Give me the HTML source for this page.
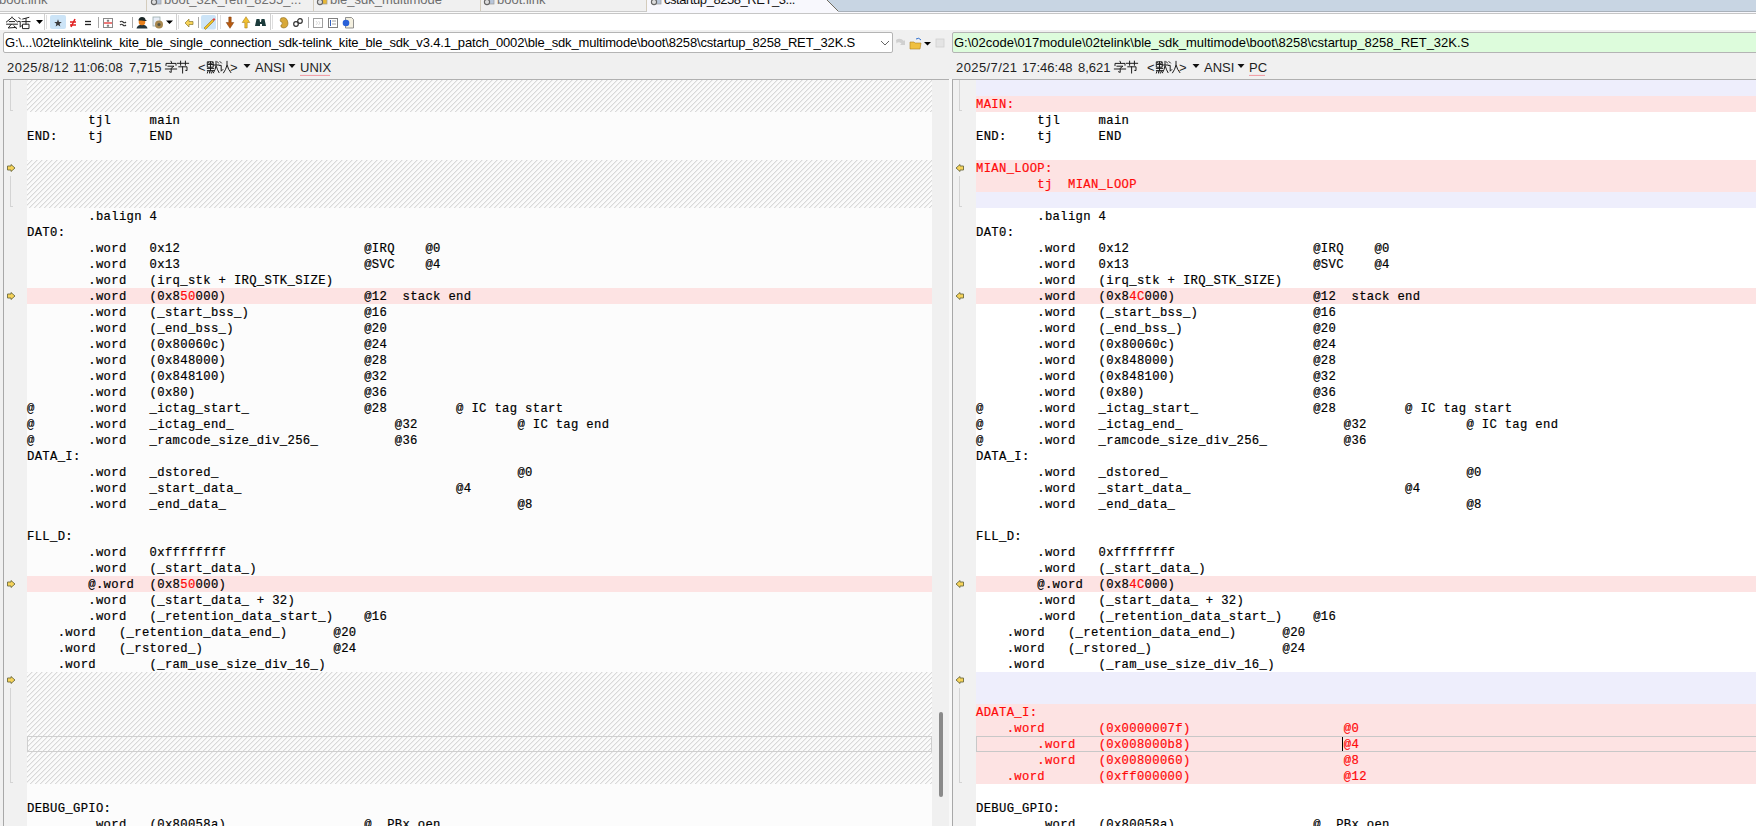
<!DOCTYPE html>
<html><head><meta charset="utf-8"><style>
*{margin:0;padding:0;box-sizing:border-box}
html,body{width:1756px;height:826px;overflow:hidden}
body{position:relative;background:#f0f0f0;font-family:"Liberation Sans",sans-serif;color:#000}
.a{position:absolute}
.bg{position:absolute;height:16px}
.pink{background:#fde3e3}
.lav{background:#eeeefc}
.hatch{position:absolute;display:block}
.ln{position:absolute;height:16px;line-height:16px;white-space:pre;font-family:"Liberation Mono",monospace;font-size:12.22px;letter-spacing:0.33px;color:#000;padding-top:1px;-webkit-text-stroke:0.2px #000}
.r{color:#ff0a0a;-webkit-text-stroke-color:#ff0a0a}
.ui{position:absolute;white-space:pre;font-size:13px;line-height:16px;color:#1e1e1e;padding-top:1.5px}

</style></head><body>
<svg width="0" height="0" style="position:absolute"><defs>
<pattern id="hp" width="5" height="5" patternUnits="userSpaceOnUse"><rect width="5" height="5" fill="#fbfbfb"/><rect x="4" y="0" width="1" height="1" fill="#d9d9d9"/><rect x="0" y="0" width="1" height="1" fill="#ededed"/><rect x="3" y="1" width="1" height="1" fill="#d9d9d9"/><rect x="4" y="1" width="1" height="1" fill="#ededed"/><rect x="2" y="2" width="1" height="1" fill="#d9d9d9"/><rect x="3" y="2" width="1" height="1" fill="#ededed"/><rect x="1" y="3" width="1" height="1" fill="#d9d9d9"/><rect x="2" y="3" width="1" height="1" fill="#ededed"/><rect x="0" y="4" width="1" height="1" fill="#d9d9d9"/><rect x="1" y="4" width="1" height="1" fill="#ededed"/></pattern>
</defs></svg>
<!-- tab bar -->
<div class="a" style="left:0;top:0;width:1756px;height:11px;background:#f0f0f0"></div>
<div class="a" style="left:0;top:11px;width:1756px;height:1px;background:#c9c9c9"></div>
<div class="a" style="left:0;top:12px;width:1756px;height:1px;background:#fbfbfb"></div>
<div class="a" style="left:0;top:13px;width:1756px;height:1px;background:#c6c6c6"></div>
<div class="a" style="left:0;top:14px;width:1756px;height:16px;background:#ffffff"></div>
<!-- right blue area -->
<svg class="a" style="left:640px;top:0" width="1116" height="13">
<polygon points="7,0 187,0 198.5,11.5 1116,11.5 1116,13 7,13" fill="#f8f8fd"/>
<polygon points="187,0 1116,0 1116,11 198.5,11" fill="#c8d5e3"/>
<line x1="187" y1="0" x2="198.5" y2="11.5" stroke="#6f6a5e" stroke-width="1"/>
<line x1="198.5" y1="11.5" x2="1116" y2="11.5" stroke="#a9b1ba" stroke-width="1"/>
<rect x="6" y="0" width="1" height="11" fill="#d4ccbc"/>
</svg>
<div class="a" style="left:146px;top:0;width:1px;height:11px;background:#d4ccbc"></div>
<div class="a" style="left:313px;top:0;width:1px;height:11px;background:#d4ccbc"></div>
<div class="a" style="left:480px;top:0;width:1px;height:11px;background:#d4ccbc"></div>
<div class="ui" style="left:-1px;top:-9.5px;color:#6e6e6e">boot.link</div>
<div class="ui" style="left:164px;top:-9.5px;color:#6e6e6e">boot_32k_reth_8255_...</div>
<div class="ui" style="left:330px;top:-9.5px;color:#6e6e6e">ble_sdk_multimode</div>
<div class="ui" style="left:497px;top:-9.5px;color:#6e6e6e">boot.link</div>
<div class="ui" style="left:664px;top:-9.5px;color:#111;letter-spacing:-0.45px">cstartup_8258_RET_3...</div>
<!-- tab icons -->
<svg class="a" style="left:150px;top:-3px" width="12" height="10"><rect x="5" y="0" width="6" height="7" fill="#b8c6da" stroke="#999" stroke-width="0.7"/><circle cx="4" cy="5" r="2.6" fill="#ddd" stroke="#666" stroke-width="1.1"/></svg>
<svg class="a" style="left:316px;top:-3px" width="12" height="10"><rect x="5" y="0" width="6" height="7" fill="#e8b838" stroke="#999" stroke-width="0.7"/><circle cx="4" cy="5" r="2.6" fill="#ddd" stroke="#666" stroke-width="1.1"/></svg>
<svg class="a" style="left:483px;top:-3px" width="12" height="10"><rect x="5" y="0" width="6" height="7" fill="#b8c6da" stroke="#999" stroke-width="0.7"/><circle cx="4" cy="5" r="2.6" fill="#ddd" stroke="#666" stroke-width="1.1"/></svg>
<svg class="a" style="left:650px;top:-3px" width="12" height="10"><rect x="5" y="0" width="6" height="7" fill="#b8c6da" stroke="#999" stroke-width="0.7"/><circle cx="4" cy="5" r="2.6" fill="#ddd" stroke="#666" stroke-width="1.1"/></svg>
<!-- toolbar -->
<svg class="a" style="left:0;top:14px" width="380" height="16">
<polygon points="36,6 43,6 39.5,10" fill="#000"/>
<rect x="44" y="0" width="1" height="16" fill="#d0d0d0"/>
<rect x="46" y="1" width="1" height="14" fill="#c8c8c8" opacity=".6"/>
<rect x="50" y="1" width="16" height="14" rx="2" fill="#cce4f7"/>
<polygon points="58.00,5.30 59.00,7.92 61.80,8.06 59.62,9.83 60.35,12.54 58.00,11.00 55.65,12.54 56.38,9.83 54.20,8.06 57.00,7.92" fill="#3a3a3a"/>
<g stroke="#e02020" stroke-width="1.5"><line x1="70" y1="8" x2="76" y2="8"/><line x1="70" y1="11" x2="76" y2="11"/><line x1="75" y1="5" x2="71" y2="13"/></g>
<g stroke="#222" stroke-width="1.3"><line x1="85" y1="7.5" x2="91" y2="7.5"/><line x1="85" y1="10.5" x2="91" y2="10.5"/></g>
<rect x="98" y="3" width="1" height="11" fill="#a8a8a8"/>
<rect x="103.5" y="4.5" width="9" height="9" fill="#fff" stroke="#8a8a8a"/>
<line x1="104" y1="9" x2="112" y2="9" stroke="#e02020" stroke-width="1.2"/><path d="M108,5.5 v2.5 M106.8,6.8 h2.4 M108,10.5 v2.5 M106.8,11.8 h2.4" stroke="#555" stroke-width="0.8"/>
<g stroke="#333" stroke-width="1.1" fill="none"><path d="M120,8 q1.5,-1.5 3,0 t3,0"/><path d="M120,11 q1.5,-1.5 3,0 t3,0"/></g>
<rect x="132" y="3" width="1" height="11" fill="#a8a8a8"/>
<path d="M136.5,14.5 q0.5,-3.5 5.5,-4 q5,0.5 5.5,4 z" fill="#24343a"/>
<circle cx="142" cy="8" r="3.3" fill="#e8801c"/>
<path d="M138.4,6.6 q0.4,-3.6 3.6,-3.6 q3.2,0 3.6,3 l1.6,1 l-2,0 q-3,-1 -6.8,-0.4 z" fill="#1a2626"/>
<rect x="153" y="3" width="7" height="9" fill="#e8eef8" stroke="#9aa" stroke-width="0.8"/>
<circle cx="159" cy="10.5" r="4" fill="#a88850"/><circle cx="159" cy="10.5" r="1.6" fill="#554"/>
<polygon points="166,6.5 173,6.5 169.5,10" fill="#000"/>
<rect x="176" y="0" width="1" height="16" fill="#d0d0d0"/>
<rect x="178" y="1" width="1" height="14" fill="#c8c8c8" opacity=".6"/>
<path d="M185,9 l4,-4 v2.5 h4 v3 h-4 v2.5 z" fill="#f8d458" stroke="#8a7a30" stroke-width="0.7"/>
<rect x="198" y="3" width="1" height="11" fill="#a8a8a8"/>
<rect x="201" y="1" width="15" height="14.5" rx="2" fill="#cce4f7"/>
<path d="M204,14 l8.5,-8.5 l1.5,1.5 l-8.5,8.5 z" fill="#f0c020" stroke="#806010" stroke-width="0.5"/>
<path d="M212.5,5.5 l1.5,-1.5 l1.5,1.5 l-1.5,1.5 z" fill="#e04040"/>
<rect x="217" y="0" width="1" height="16" fill="#d0d0d0"/>
<rect x="220" y="1" width="1" height="14" fill="#c8c8c8" opacity=".6"/>
<path d="M228.8,3 h2.4 v5.5 h2.6 l-3.8,5.8 l-3.8,-5.8 h2.6 z" fill="#b85a10" stroke="#7a3a08" stroke-width="0.5"/>
<path d="M244.8,14 h2.4 v-5.5 h2.6 l-3.8,-5.8 l-3.8,5.8 h2.6 z" fill="#f0c030" stroke="#9a7010" stroke-width="0.5"/>
<path d="M255,12 l1.5,-7 h3 l0.5,3 h1 l0.5,-3 h3 l1.5,7 h-4 v-2 h-2 v2 z" fill="#1c3c3c"/>
<rect x="270" y="0" width="1" height="16" fill="#d0d0d0"/>
<rect x="272" y="1" width="1" height="14" fill="#c8c8c8" opacity=".6"/>
<path d="M281,4 q6,-2 7,5 q0,5 -5,5 q-3,-1 -2,-3 q2,0 1,-3 q-3,0 -1,-4z" fill="#d8a838" stroke="#8a6a20" stroke-width="0.6"/>
<g stroke="#333" stroke-width="1.2" fill="none"><circle cx="296" cy="10" r="2.3"/><circle cx="300" cy="7" r="2.3"/></g>
<rect x="308" y="3" width="1" height="11" fill="#a8a8a8"/>
<rect x="313.5" y="4.5" width="9" height="9" fill="#fff" stroke="#a0a0a0"/><path d="M316,7 l1.5,2 l-1.5,2 M318.5,7 l1.5,2 l-1.5,2" stroke="#d0d0d0" fill="none" stroke-width="0.8"/>
<rect x="328.5" y="4.5" width="9" height="9" fill="#fff" stroke="#808080"/>
<g stroke="#3060c0" stroke-width="1"><line x1="330.5" y1="6" x2="330.5" y2="12"/></g>
<g stroke="#888" stroke-width="0.8"><line x1="332" y1="7" x2="336" y2="7"/><line x1="332" y1="10" x2="336" y2="10"/></g>
<path d="M345.5,3.5 h6 l2,2 v8.5 h-8 z" fill="#f4f0e0" stroke="#777" stroke-width="0.8"/>
<circle cx="346" cy="9" r="3.3" fill="#2860d8"/>
</svg>

<!-- path bars -->
<div class="a" style="left:3px;top:32px;width:890px;height:21px;background:#fff;border:1px solid #b4b4b4;border-radius:2px"></div>
<div class="ui" style="left:5px;top:33px;font-size:13px;line-height:16px;color:#000;letter-spacing:-0.155px" id="pathL">G:\...\02telink\telink_kite_ble_single_connection_sdk-telink_kite_ble_sdk_v3.4.1_patch_0002\ble_sdk_multimode\boot\8258\cstartup_8258_RET_32K.S</div>
<svg class="a" style="left:878px;top:36px" width="14" height="14"><path d="M3,5 l4,4 l4,-4" stroke="#666" fill="none" stroke-width="1"/></svg>
<svg class="a" style="left:894px;top:34px" width="58" height="18">
<path d="M2,6 q4,-3 8,1 l1,-1 l0,5 l-5,0 l1.5,-1.5 q-3,-2.5 -5,0z" fill="#d0d0d0"/>
<path d="M16,8 h4 l1,1 h6 l-1,6 h-10 z" fill="#f0c040" stroke="#b08020" stroke-width="0.6"/>
<path d="M22,5 q3,-2 5,1" stroke="#3070d0" fill="none" stroke-width="1"/>
<polygon points="30,8 37,8 33.5,11.5" fill="#000"/>
<rect x="42" y="5" width="8" height="8" fill="#e4e4e4" stroke="#d0d0d0" stroke-width="0.8"/>
</svg>
<div class="a" style="left:952px;top:32px;width:810px;height:21px;background:#ddfcdc;border:1px solid #b4b4b4;border-radius:2px"></div>
<div class="ui" style="left:954px;top:33px;font-size:13px;line-height:16px;color:#000" id="pathR">G:\02code\017module\02telink\ble_sdk_multimode\boot\8258\cstartup_8258_RET_32K.S</div>

<!-- pane frames -->
<div class="a" style="left:3px;top:79px;width:946px;height:760px;border-top:1px solid #b0b0b0;border-left:1px solid #a8a8a8;background:#f0f0f0"></div>
<div class="a" style="left:4px;top:80px;width:23px;height:760px;background:#f1f1f1"></div>
<div class="a" style="left:27px;top:80px;width:905px;height:760px;background:#fcfcfc"></div>
<div class="a" style="left:932px;top:80px;width:17px;height:760px;background:#f0f0f0"></div>
<div class="a" style="left:949px;top:79px;width:3px;height:760px;background:#f8f8f8"></div>
<div class="a" style="left:952px;top:79px;width:810px;height:760px;border-top:1px solid #b0b0b0;border-left:1px solid #a8a8a8;background:#f0f0f0"></div>
<div class="a" style="left:953px;top:80px;width:23px;height:760px;background:#f1f1f1"></div>
<div class="a" style="left:976px;top:80px;width:780px;height:760px;background:#ffffff"></div>
<div class="ui" style="left:7px;top:58px;letter-spacing:0.5px">2025/8/12</div><div class="ui" style="left:73px;top:58px;">11:06:08</div><div class="ui" style="left:129px;top:58px;">7,715</div><svg class="a" style="left:165px;top:60.5px;overflow:visible" width="12" height="12"><path d="M6,0.3 L6.6,1.8 M1,4.6 V2.4 H11 V4.2 M3,5.2 H9 L6.2,7.2 V11.4 L4.6,10.8 M0.4,8 H11.6" transform="scale(1.0)" fill="none" stroke="#1e1e1e" stroke-width="1.0" stroke-linecap="square"/></svg><svg class="a" style="left:177px;top:61px;overflow:visible" width="12" height="12"><path d="M0.4,2.3 H11.6 M3.6,0.2 V4.2 M8.4,0.2 V4.2 M1.8,5.8 H10 V9.6 L8.8,9.4 M5.6,5.8 V12" transform="scale(1.0)" fill="none" stroke="#1e1e1e" stroke-width="1.0" stroke-linecap="square"/></svg><div class="ui" style="left:198px;top:58px;">&lt;</div><svg class="a" style="left:206.5px;top:60.5px;overflow:visible" width="12" height="12"><path d="M0.8,0.8 H6.2 V6.2 H0.8 Z M3.5,0.8 V9.6 M0.8,3.5 H6.2 M1.5,1.6 L2.3,2.8 M5.4,1.6 L4.6,2.8 M0.4,7.4 H6.6 M0.4,9.6 H6.6 M0.8,10.6 L0.4,12 M2.4,10.6 L2.6,12 M4,10.6 L4.4,12 M5.6,10.6 L6.4,11.8 M6.6,4 H11.8 M9,0.4 V4.4 Q8.6,8.6 6.6,11.6 M9.4,5.6 Q10.4,9 12,11.6 M10.4,0.8 L11.4,2" transform="scale(1.0)" fill="none" stroke="#1e1e1e" stroke-width="1.0" stroke-linecap="square"/></svg><svg class="a" style="left:219px;top:61px;overflow:visible" width="12" height="12"><path d="M1,0.6 L2.4,2 M0.4,4.4 H2.2 V10.2 L3.8,8.6 M8,0.4 V4 Q7,8.6 4.6,11.8 M8.2,4.4 Q9.2,8.6 11.8,11.6" transform="scale(1.0)" fill="none" stroke="#1e1e1e" stroke-width="1.0" stroke-linecap="square"/></svg><div class="ui" style="left:230px;top:58px;">&gt;</div><svg class="a" style="left:0px;top:58px" width="340" height="18"><polygon points="243.5,6 250.5,6 247,10" fill="#111"/><polygon points="288.5,6 295.5,6 292,10" fill="#111"/><line x1="300" y1="17.5" x2="330" y2="17.5" stroke="#f0a0a8" stroke-width="1.2"/></svg><div class="ui" style="left:255px;top:58px;">ANSI</div><div class="ui" style="left:300px;top:58px;">UNIX</div><div class="ui" style="left:956px;top:58px;letter-spacing:0.4px">2025/7/21</div><div class="ui" style="left:1022px;top:58px;">17:46:48</div><div class="ui" style="left:1078px;top:58px;">8,621</div><svg class="a" style="left:1114px;top:60.5px;overflow:visible" width="12" height="12"><path d="M6,0.3 L6.6,1.8 M1,4.6 V2.4 H11 V4.2 M3,5.2 H9 L6.2,7.2 V11.4 L4.6,10.8 M0.4,8 H11.6" transform="scale(1.0)" fill="none" stroke="#1e1e1e" stroke-width="1.0" stroke-linecap="square"/></svg><svg class="a" style="left:1126px;top:61px;overflow:visible" width="12" height="12"><path d="M0.4,2.3 H11.6 M3.6,0.2 V4.2 M8.4,0.2 V4.2 M1.8,5.8 H10 V9.6 L8.8,9.4 M5.6,5.8 V12" transform="scale(1.0)" fill="none" stroke="#1e1e1e" stroke-width="1.0" stroke-linecap="square"/></svg><div class="ui" style="left:1147px;top:58px;">&lt;</div><svg class="a" style="left:1155.5px;top:60.5px;overflow:visible" width="12" height="12"><path d="M0.8,0.8 H6.2 V6.2 H0.8 Z M3.5,0.8 V9.6 M0.8,3.5 H6.2 M1.5,1.6 L2.3,2.8 M5.4,1.6 L4.6,2.8 M0.4,7.4 H6.6 M0.4,9.6 H6.6 M0.8,10.6 L0.4,12 M2.4,10.6 L2.6,12 M4,10.6 L4.4,12 M5.6,10.6 L6.4,11.8 M6.6,4 H11.8 M9,0.4 V4.4 Q8.6,8.6 6.6,11.6 M9.4,5.6 Q10.4,9 12,11.6 M10.4,0.8 L11.4,2" transform="scale(1.0)" fill="none" stroke="#1e1e1e" stroke-width="1.0" stroke-linecap="square"/></svg><svg class="a" style="left:1168px;top:61px;overflow:visible" width="12" height="12"><path d="M1,0.6 L2.4,2 M0.4,4.4 H2.2 V10.2 L3.8,8.6 M8,0.4 V4 Q7,8.6 4.6,11.8 M8.2,4.4 Q9.2,8.6 11.8,11.6" transform="scale(1.0)" fill="none" stroke="#1e1e1e" stroke-width="1.0" stroke-linecap="square"/></svg><div class="ui" style="left:1179px;top:58px;">&gt;</div><svg class="a" style="left:949px;top:58px" width="340" height="18"><polygon points="243.5,6 250.5,6 247,10" fill="#111"/><polygon points="288.5,6 295.5,6 292,10" fill="#111"/><line x1="300" y1="17.5" x2="316" y2="17.5" stroke="#f0a0a8" stroke-width="1.2"/></svg><div class="ui" style="left:1204px;top:58px;">ANSI</div><div class="ui" style="left:1249px;top:58px;">PC</div><svg class="a" style="left:6px;top:16.5px;overflow:visible" width="12" height="12"><path d="M6,0.4 L0.4,5 M6,0.4 L11.6,5 M3.4,4.6 H8.6 M0.6,7.2 H11.4 M5.2,7.4 L2.2,11 L10,10.4 M8,8.8 L10.4,11.6" transform="scale(1.0)" fill="none" stroke="#222" stroke-width="1.0" stroke-linecap="square"/></svg><svg class="a" style="left:18px;top:16.5px;overflow:visible" width="12" height="12"><path d="M1,0.6 L2.4,2 M0.4,4.4 H2.2 V10.2 L3.8,8.6 M10.8,0.4 L4.8,2 M4,4.6 H12 M8,1.6 V7.2 M5,7.2 H11 V11.6 H5 Z" transform="scale(1.0)" fill="none" stroke="#222" stroke-width="1.0" stroke-linecap="square"/></svg><div class="bg pink" style="left:27px;top:288px;width:905px"></div>
<div class="bg pink" style="left:27px;top:576px;width:905px"></div>
<svg class="hatch" style="left:27px;top:80px" width="905" height="32"><rect width="100%" height="100%" fill="url(#hp)"/></svg>
<svg class="hatch" style="left:27px;top:160px" width="905" height="48"><rect width="100%" height="100%" fill="url(#hp)"/></svg>
<svg class="hatch" style="left:27px;top:672px" width="905" height="112"><rect width="100%" height="100%" fill="url(#hp)"/></svg>
<div class="ln" style="left:27px;top:112px">        tjl     main</div>
<div class="ln" style="left:27px;top:128px">END:    tj      END</div>
<div class="ln" style="left:27px;top:208px">        .balign 4</div>
<div class="ln" style="left:27px;top:224px">DAT0:</div>
<div class="ln" style="left:27px;top:240px">        .word   0x12                        @IRQ    @0</div>
<div class="ln" style="left:27px;top:256px">        .word   0x13                        @SVC    @4</div>
<div class="ln" style="left:27px;top:272px">        .word   (irq_stk + IRQ_STK_SIZE)</div>
<div class="ln" style="left:27px;top:304px">        .word   (_start_bss_)               @16</div>
<div class="ln" style="left:27px;top:320px">        .word   (_end_bss_)                 @20</div>
<div class="ln" style="left:27px;top:336px">        .word   (0x80060c)                  @24</div>
<div class="ln" style="left:27px;top:352px">        .word   (0x848000)                  @28</div>
<div class="ln" style="left:27px;top:368px">        .word   (0x848100)                  @32</div>
<div class="ln" style="left:27px;top:384px">        .word   (0x80)                      @36</div>
<div class="ln" style="left:27px;top:400px">@       .word   _ictag_start_               @28         @ IC tag start</div>
<div class="ln" style="left:27px;top:416px">@       .word   _ictag_end_                     @32             @ IC tag end</div>
<div class="ln" style="left:27px;top:432px">@       .word   _ramcode_size_div_256_          @36</div>
<div class="ln" style="left:27px;top:448px">DATA_I:</div>
<div class="ln" style="left:27px;top:464px">        .word   _dstored_                                       @0</div>
<div class="ln" style="left:27px;top:480px">        .word   _start_data_                            @4</div>
<div class="ln" style="left:27px;top:496px">        .word   _end_data_                                      @8</div>
<div class="ln" style="left:27px;top:528px">FLL_D:</div>
<div class="ln" style="left:27px;top:544px">        .word   0xffffffff</div>
<div class="ln" style="left:27px;top:560px">        .word   (_start_data_)</div>
<div class="ln" style="left:27px;top:592px">        .word   (_start_data_ + 32)</div>
<div class="ln" style="left:27px;top:608px">        .word   (_retention_data_start_)    @16</div>
<div class="ln" style="left:27px;top:624px">    .word   (_retention_data_end_)      @20</div>
<div class="ln" style="left:27px;top:640px">    .word   (_rstored_)                 @24</div>
<div class="ln" style="left:27px;top:656px">    .word       (_ram_use_size_div_16_)</div>
<div class="ln" style="left:27px;top:800px">DEBUG_GPIO:</div>
<div class="ln" style="left:27px;top:816px">        .word   (0x80058a)                  @  PBx_oen</div>
<div class="ln" style="left:27px;top:288px">        .word   (0x8<span class="r">50</span>000)                  @12  stack end</div>
<div class="ln" style="left:27px;top:576px">        @.word  (0x8<span class="r">50</span>000)</div><div class="bg lav" style="left:976px;top:80px;width:780px"></div>
<div class="bg pink" style="left:976px;top:96px;width:780px"></div>
<div class="bg pink" style="left:976px;top:160px;width:780px"></div>
<div class="bg pink" style="left:976px;top:176px;width:780px"></div>
<div class="bg lav" style="left:976px;top:192px;width:780px"></div>
<div class="bg pink" style="left:976px;top:288px;width:780px"></div>
<div class="bg pink" style="left:976px;top:576px;width:780px"></div>
<div class="bg lav" style="left:976px;top:672px;width:780px"></div>
<div class="bg lav" style="left:976px;top:688px;width:780px"></div>
<div class="bg pink" style="left:976px;top:704px;width:780px"></div>
<div class="bg pink" style="left:976px;top:720px;width:780px"></div>
<div class="bg pink" style="left:976px;top:736px;width:780px"></div>
<div class="bg pink" style="left:976px;top:752px;width:780px"></div>
<div class="bg pink" style="left:976px;top:768px;width:780px"></div>
<div class="ln" style="left:976px;top:112px">        tjl     main</div>
<div class="ln" style="left:976px;top:128px">END:    tj      END</div>
<div class="ln" style="left:976px;top:208px">        .balign 4</div>
<div class="ln" style="left:976px;top:224px">DAT0:</div>
<div class="ln" style="left:976px;top:240px">        .word   0x12                        @IRQ    @0</div>
<div class="ln" style="left:976px;top:256px">        .word   0x13                        @SVC    @4</div>
<div class="ln" style="left:976px;top:272px">        .word   (irq_stk + IRQ_STK_SIZE)</div>
<div class="ln" style="left:976px;top:304px">        .word   (_start_bss_)               @16</div>
<div class="ln" style="left:976px;top:320px">        .word   (_end_bss_)                 @20</div>
<div class="ln" style="left:976px;top:336px">        .word   (0x80060c)                  @24</div>
<div class="ln" style="left:976px;top:352px">        .word   (0x848000)                  @28</div>
<div class="ln" style="left:976px;top:368px">        .word   (0x848100)                  @32</div>
<div class="ln" style="left:976px;top:384px">        .word   (0x80)                      @36</div>
<div class="ln" style="left:976px;top:400px">@       .word   _ictag_start_               @28         @ IC tag start</div>
<div class="ln" style="left:976px;top:416px">@       .word   _ictag_end_                     @32             @ IC tag end</div>
<div class="ln" style="left:976px;top:432px">@       .word   _ramcode_size_div_256_          @36</div>
<div class="ln" style="left:976px;top:448px">DATA_I:</div>
<div class="ln" style="left:976px;top:464px">        .word   _dstored_                                       @0</div>
<div class="ln" style="left:976px;top:480px">        .word   _start_data_                            @4</div>
<div class="ln" style="left:976px;top:496px">        .word   _end_data_                                      @8</div>
<div class="ln" style="left:976px;top:528px">FLL_D:</div>
<div class="ln" style="left:976px;top:544px">        .word   0xffffffff</div>
<div class="ln" style="left:976px;top:560px">        .word   (_start_data_)</div>
<div class="ln" style="left:976px;top:592px">        .word   (_start_data_ + 32)</div>
<div class="ln" style="left:976px;top:608px">        .word   (_retention_data_start_)    @16</div>
<div class="ln" style="left:976px;top:624px">    .word   (_retention_data_end_)      @20</div>
<div class="ln" style="left:976px;top:640px">    .word   (_rstored_)                 @24</div>
<div class="ln" style="left:976px;top:656px">    .word       (_ram_use_size_div_16_)</div>
<div class="ln" style="left:976px;top:800px">DEBUG_GPIO:</div>
<div class="ln" style="left:976px;top:816px">        .word   (0x80058a)                  @  PBx_oen</div>
<div class="ln" style="left:976px;top:288px">        .word   (0x8<span class="r">4C</span>000)                  @12  stack end</div>
<div class="ln" style="left:976px;top:576px">        @.word  (0x8<span class="r">4C</span>000)</div>
<div class="ln" style="left:976px;top:96px"><span class="r">MAIN:</span></div>
<div class="ln" style="left:976px;top:160px"><span class="r">MIAN_LOOP:</span></div>
<div class="ln" style="left:976px;top:176px">        <span class="r">tj</span>  <span class="r">MIAN_LOOP</span></div>
<div class="ln" style="left:976px;top:704px"><span class="r">ADATA_I:</span></div>
<div class="ln" style="left:976px;top:720px">    <span class="r">.word</span>       <span class="r">(0x0000007f)</span>                    <span class="r">@0</span></div>
<div class="ln" style="left:976px;top:736px">        <span class="r">.word</span>   <span class="r">(0x008000b8)</span>                    <span class="r">@4</span></div>
<div class="ln" style="left:976px;top:752px">        <span class="r">.word</span>   <span class="r">(0x00800060)</span>                    <span class="r">@8</span></div>
<div class="ln" style="left:976px;top:768px">    <span class="r">.word</span>       <span class="r">(0xff000000)</span>                    <span class="r">@12</span></div><!-- scrollbar thumb -->
<div class="a" style="left:939px;top:712px;width:4px;height:85px;background:#8a8a8a;border-radius:2px"></div>
<!-- current line boxes -->
<div class="a" style="left:27px;top:736px;width:905px;height:16px;border:1px solid #cfcfcf"></div>
<div class="a" style="left:976px;top:736px;width:780px;height:16px;border:1px solid #c8c8c8;border-right:none"></div>
<div class="a" style="left:1342px;top:737px;width:1px;height:14px;background:#000"></div>
<svg class="a" style="left:0;top:160px" width="20" height="16"><path d="M7.5,6 H11 V4.5 L15,8 L11,11.5 V10 H7.5 Z" fill="#f6d35a" stroke="#6e6c40" stroke-width="0.9" stroke-linejoin="round"/></svg>
<svg class="a" style="left:949px;top:160px" width="20" height="16"><path d="M7,8 L11,4.5 V6 H14.5 V10 H11 V11.5 Z" fill="#f6d35a" stroke="#6e6c40" stroke-width="0.9" stroke-linejoin="round"/></svg>
<svg class="a" style="left:0;top:288px" width="20" height="16"><path d="M7.5,6 H11 V4.5 L15,8 L11,11.5 V10 H7.5 Z" fill="#f6d35a" stroke="#6e6c40" stroke-width="0.9" stroke-linejoin="round"/></svg>
<svg class="a" style="left:949px;top:288px" width="20" height="16"><path d="M7,8 L11,4.5 V6 H14.5 V10 H11 V11.5 Z" fill="#f6d35a" stroke="#6e6c40" stroke-width="0.9" stroke-linejoin="round"/></svg>
<svg class="a" style="left:0;top:576px" width="20" height="16"><path d="M7.5,6 H11 V4.5 L15,8 L11,11.5 V10 H7.5 Z" fill="#f6d35a" stroke="#6e6c40" stroke-width="0.9" stroke-linejoin="round"/></svg>
<svg class="a" style="left:949px;top:576px" width="20" height="16"><path d="M7,8 L11,4.5 V6 H14.5 V10 H11 V11.5 Z" fill="#f6d35a" stroke="#6e6c40" stroke-width="0.9" stroke-linejoin="round"/></svg>
<svg class="a" style="left:0;top:672px" width="20" height="16"><path d="M7.5,6 H11 V4.5 L15,8 L11,11.5 V10 H7.5 Z" fill="#f6d35a" stroke="#6e6c40" stroke-width="0.9" stroke-linejoin="round"/></svg>
<svg class="a" style="left:949px;top:672px" width="20" height="16"><path d="M7,8 L11,4.5 V6 H14.5 V10 H11 V11.5 Z" fill="#f6d35a" stroke="#6e6c40" stroke-width="0.9" stroke-linejoin="round"/></svg>
<div class="a" style="left:10px;top:80px;width:1px;height:30px;background:#d4d4d4"></div><div class="a" style="left:10px;top:110px;width:3px;height:1px;background:#d4d4d4"></div>
<div class="a" style="left:959px;top:80px;width:1px;height:30px;background:#d4d4d4"></div><div class="a" style="left:959px;top:110px;width:3px;height:1px;background:#d4d4d4"></div>
<div class="a" style="left:10px;top:176px;width:1px;height:30px;background:#d4d4d4"></div><div class="a" style="left:10px;top:206px;width:3px;height:1px;background:#d4d4d4"></div>
<div class="a" style="left:959px;top:176px;width:1px;height:30px;background:#d4d4d4"></div><div class="a" style="left:959px;top:206px;width:3px;height:1px;background:#d4d4d4"></div>
<div class="a" style="left:10px;top:688px;width:1px;height:94px;background:#d4d4d4"></div><div class="a" style="left:10px;top:782px;width:3px;height:1px;background:#d4d4d4"></div>
<div class="a" style="left:959px;top:688px;width:1px;height:94px;background:#d4d4d4"></div><div class="a" style="left:959px;top:782px;width:3px;height:1px;background:#d4d4d4"></div>
</body></html>
